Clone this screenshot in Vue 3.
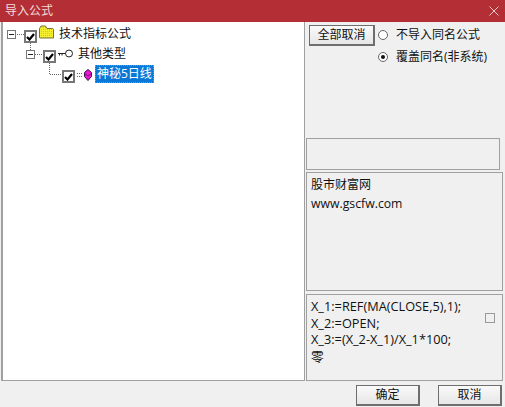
<script setup>
const rows = [
  { text: '技术指标公式', indent: 0, icon: 'folder', exp: true },
  { text: '其他类型', indent: 1, icon: 'key', exp: true },
  { text: '神秘5日线', indent: 2, icon: 'gem', exp: false, sel: true }
]
</script>

<template>
  <div class="win">
    <header class="title">
      <span>导入公式</span>
      <svg class="close" width="10" height="10" viewBox="0 0 10 10"><path d="M.5.5l9 9M9.5.5l-9 9" stroke="#e9c9ca" fill="none"/></svg>
    </header>
    <main class="body">
      <section class="tree">
        <svg class="lines" width="90" height="70" viewBox="0 0 90 70">
          <path d="M14 12.500h7M27.500 21v7M32 32.500h8M46.500 41v11.500h12" stroke="#666" stroke-dasharray="1 1" fill="none"/>
        </svg>
        <div v-for="r in rows" :key="r.text" class="row" :class="'i' + r.indent">
          <span v-if="r.exp" class="exp"><i></i></span>
          <span class="chk">
            <svg width="9" height="8" viewBox="0 0 9 8"><path d="M1 4l2.500 2.500L8 1" stroke="#000" stroke-width="2.200" fill="none"/></svg>
          </span>
          <svg v-if="r.icon === 'folder'" class="ico folder" width="15" height="14" viewBox="0 0 15 14">
            <defs>
              <pattern id="dither" width="2" height="2" patternUnits="userSpaceOnUse">
                <rect width="2" height="2" fill="#f5ee30"/><rect width="1" height="1" fill="#c9c46a"/>
              </pattern>
            </defs>
            <path d="M.5 3.500V12.500a.5.5 0 0 0 .5.5h13.500V4.500a1 1 0 0 0-1-1H8L6.500 1h-4.500z" fill="url(#dither)" stroke="#77733f"/>
          </svg>
          <svg v-else-if="r.icon === 'key'" class="ico key" width="15" height="9" viewBox="0 0 15 9">
            <path d="M0 4.500h8M1.500 4.500v2M4 4.500v2" stroke="#222" fill="none"/><circle cx="11" cy="4.500" r="3.500" fill="#fff" stroke="#222"/>
          </svg>
          <svg v-else class="ico gem" width="15" height="12" viewBox="0 0 15 12">
            <path d="M0 4.500h6M0 7.500h6" stroke="#666" stroke-dasharray="1 1"/>
            <path d="M11 .5l3.500 3v4L11 11.500l-3.500-4v-4z" fill="#ea18d4" stroke="#3a1040"/>
            <path d="M7.500 4.500L11 7l3.500-2.500" stroke="#7a1070" fill="none"/>
          </svg>
          <span class="label" :class="{ sel: r.sel }">{{ r.text }}</span>
        </div>
      </section>

      <aside class="side">
        <div class="top">
          <button class="btn all">全部取消</button>
          <div class="radios">
            <label class="radio"><i></i>不导入同名公式</label>
            <label class="radio on"><i></i>覆盖同名(非系统)</label>
          </div>
        </div>
        <div class="box empty"></div>
        <div class="box info">
          <div>股市财富网</div>
          <div class="url">www.gscfw.com</div>
        </div>
        <div class="box code">
          <div class="lines-text">
            <div>X_1:=REF(MA(CLOSE,5),1);</div>
            <div>X_2:=OPEN;</div>
            <div>X_3:=(X_2-X_1)/X_1*100;</div>
            <div>零</div>
          </div>
          <span class="square"></span>
        </div>
      </aside>
    </main>
    <footer class="foot">
      <button class="btn">确定</button>
      <button class="btn">取消</button>
    </footer>
  </div>
</template>

<style scoped>
.win {
  width: 505px;
  height: 407px;
  background: #f0f0f0;
  display: flex;
  flex-direction: column;
  font: 12px/20px "Open Sans", "Noto Sans CJK SC", sans-serif;
  color: #111;
  overflow: hidden;
}
.title {
  height: 22px;
  flex: none;
  background: #b32f35;
  color: #f3dcdc;
  padding: 0 6px 0 5px;
  display: flex;
  align-items: center;
  justify-content: space-between;
  font-size: 12px;
}
.body {
  height: 359px;
  flex: none;
  display: flex;
  gap: 1px;
}
.tree {
  position: relative;
  width: 304px;
  flex: none;
  margin-left: 1px;
  background: #fff;
  border-left: 2px solid #a0a0a0;
  border-right: 1px solid #a0a0a0;
  border-bottom: 1px solid #a0a0a0;
  padding-top: 2px;
  color: #111;
  box-sizing: border-box;
}
.lines { position: absolute; left: 0; top: 0; pointer-events: none; }
.row {
  height: 20px;
  display: flex;
  align-items: center;
  position: relative;
}
.i0 { padding-left: 4px; }
.i1 { padding-left: 23px; }
.i2 { padding-left: 59px; }
.exp {
  width: 7px;
  height: 7px;
  border: 1px solid #777;
  background: #fff;
  display: flex;
  align-items: center;
  justify-content: center;
  margin-right: 8px;
  flex: none;
}
.exp i { width: 5px; height: 1px; background: #222; flex: none; }
.chk {
  width: 7px;
  height: 7px;
  padding: 1px;
  border: 2px solid #777;
  background: #fff;
  display: flex;
  align-items: center;
  justify-content: center;
  margin: 5px 2px 0 0;
  flex: none;
}
.chk svg { flex: none; }
.ico { flex: none; margin-right: 5px; }
.folder { margin-bottom: 4px; }
.key { margin-bottom: 1px; }
.gem { margin-right: 3px; margin-top: 1px; }
.label { padding: 0; line-height: 18px; }
.sel {
  background: #0a78d7;
  color: #fff;
  outline: 1px dotted #e08020;
  outline-offset: -1px;
  padding: 0 2px;
  height: 18px;
  line-height: 18px;
}
.side {
  flex: 1;
  display: flex;
  flex-direction: column;
  padding-right: 2px;
}
.top {
  height: 113px;
  padding: 3px 0 0 3px;
  display: flex;
  gap: 3px;
  flex: none;
}
.btn {
  font: 12px/18px "Open Sans", "Noto Sans CJK SC", sans-serif;
  color: #111;
  background: linear-gradient(#fafafa, #e6e6e6);
  border: 1px solid #6e6e6e;
  border-right-width: 2px;
  border-bottom-width: 2px;
  padding: 0;
  width: 64px;
  height: 21px;
}
.all { width: 66px; }
.radios { display: flex; flex-direction: column; gap: 2px; }
.radio { display: flex; align-items: center; gap: 8px; height: 20px; }
.radio i {
  width: 8px;
  height: 8px;
  border: 1px solid #666;
  border-radius: 50%;
  background: #fff;
  display: flex;
  align-items: center;
  justify-content: center;
}
.radio.on i::after { content: ""; width: 4px; height: 4px; border-radius: 50%; background: #111; }
.box {
  border: 1px solid #a0a0a0;
  box-sizing: border-box;
  flex: none;
}
.empty { height: 32px; width: 194px; }
.info { height: 119px; margin-top: 2px; padding: 2px 0 0 4px; line-height: 19px; }
.url { font-size: 12.250px; }
.code {
  height: 87px;
  margin-top: 3px;
  padding: 3px 7px 0 4px;
  display: flex;
  justify-content: space-between;
  align-items: flex-start;
  font-size: 12.750px;
  line-height: 16.670px;
}
.square {
  width: 8px;
  height: 8px;
  border: 1px solid #999;
  margin-top: 15px;
  flex: none;
}
.foot {
  flex: 1;
  display: flex;
  justify-content: flex-end;
  align-items: flex-start;
  gap: 18px;
  padding: 4px 3px 0 0;
}
</style>
